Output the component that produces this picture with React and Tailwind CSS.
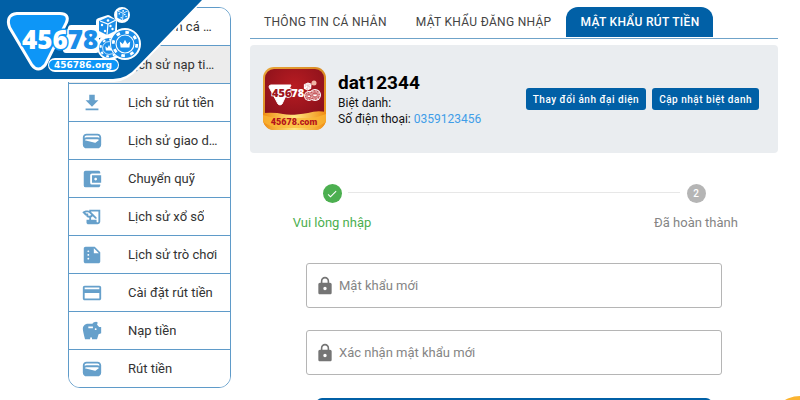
import {
    MdAccountBalanceWallet,
    MdCheck,
    MdCreditCard,
    MdDownload,
    MdHistoryEdu,
    MdLock,
    MdPerson,
    MdSavings,
    MdSummarize,
    MdUpload,
    MdWallet,
} from "react-icons/md";

const menu = [
    { label: "Thông tin cá nhân", icon: MdPerson },
    { label: "Lịch sử nạp tiền", icon: MdUpload, active: true },
    { label: "Lịch sử rút tiền", icon: MdDownload },
    { label: "Lịch sử giao dịch", icon: MdWallet },
    { label: "Chuyển quỹ", icon: MdAccountBalanceWallet },
    { label: "Lịch sử xổ số", icon: MdHistoryEdu },
    { label: "Lịch sử trò chơi", icon: MdSummarize },
    { label: "Cài đặt rút tiền", icon: MdCreditCard },
    { label: "Nạp tiền", icon: MdSavings },
    { label: "Rút tiền", icon: MdWallet },
];

const tabs = [
    { label: "THÔNG TIN CÁ NHÂN" },
    { label: "MẬT KHẨU ĐĂNG NHẬP" },
    { label: "MẬT KHẨU RÚT TIỀN", active: true },
];

function Chip({ cx, cy, r, fill, mark }) {
    return (
        <g>
            <circle cx={cx} cy={cy} r={r} fill={fill} />
            <circle
                cx={cx}
                cy={cy}
                r={r * 0.84}
                fill="none"
                stroke={mark}
                strokeWidth={r * 0.2}
                strokeDasharray={`${r * 0.26} ${r * 0.4}`}
            />
            <circle cx={cx} cy={cy} r={r * 0.64} fill={fill} stroke={mark} strokeWidth={r * 0.08} />
            <path
                d="M-5 4 -6 -3 -2.500 0 0 -5 2.500 0 6 -3 5 4Z"
                fill={mark}
                transform={`translate(${cx} ${cy}) scale(${r / 16})`}
            />
        </g>
    );
}

function Die({ x, y, size, fill, mark }) {
    return (
        <g transform={`translate(${x} ${y}) scale(${size / 20})`}>
            <path d="M2 5 11 1 19 4 18 15 10 19 2 15Z" fill={fill} strokeLinejoin="round" />
            <path d="M3 5 11 8 19 4M11 8 10 19" fill="none" stroke={mark} strokeWidth="1.200" />
            <g fill={mark}>
                <circle cx="11" cy="4.500" r="1.300" />
                <circle cx="5" cy="9" r="1.200" />
                <circle cx="8" cy="15" r="1.200" />
                <circle cx="13.500" cy="10" r="1.200" />
                <circle cx="15.500" cy="13" r="1.200" />
            </g>
        </g>
    );
}

function CornerLogo() {
    return (
        <svg
            className="pointer-events-none absolute top-0 left-0 z-10"
            width="216"
            height="83"
            viewBox="0 0 216 83"
            role="img"
            aria-label="45678"
        >
            <path d="M0 0H204L140 67Q127 82 114 82H0Z" fill="#fff" />
            <path d="M0 0H202L137 67Q127 79 113 79H0Z" fill="#0160a6" />
            <g fill="#fff" stroke="#fff" strokeWidth="6" strokeLinejoin="round">
                <path d="M17 15H60Q68 15 65 22L44 64Q38 71 33 64L11 27Q7 16 17 15Z" />
                <path d="M71 28H96V50H66Z" />
                <path d="M99 21 108 18 114 22V33L99 35Z" />
                <circle cx="110" cy="47" r="10" />
                <circle cx="125" cy="44" r="13" />
                <circle cx="122" cy="15" r="5" />
            </g>
            <rect x="48" y="58" width="71" height="14" rx="7" fill="#fff" />
            <path d="M17 15H60Q68 15 65 22L44 64Q38 71 33 64L11 27Q7 16 17 15Z" fill="#0d96f7" />
            <text
                x="22"
                y="49"
                fill="#fff"
                stroke="#0d96f7"
                strokeWidth="3"
                strokeLinejoin="round"
                paintOrder="stroke"
                fontFamily="'Open Sans', sans-serif"
                fontWeight="800"
                fontSize="26"
            >
                456
                <tspan fill="#1a8de8" stroke="#fff">78</tspan>
            </text>
            <Chip cx={109} cy={48} r={10} fill="#1a8de8" mark="#fff" />
            <Die x={97} y={16} size={20} fill="#1a8de8" mark="#fff" />
            <Die x={116} y={8} size={13} fill="#1a8de8" mark="#fff" />
            <circle cx="125" cy="44" r="15" fill="#fff" />
            <Chip cx={125} cy={44} r={14} fill="#1a8de8" mark="#fff" />
            <rect x="49" y="60" width="69" height="10" rx="5" fill="#0d96f7" />
            <text
                x="83"
                y="68"
                textAnchor="middle"
                fill="#fff"
                fontFamily="'DejaVu Sans', sans-serif"
                fontWeight="700"
                fontSize="9"
            >
                456786.org
            </text>
        </svg>
    );
}

function Avatar() {
    return (
        <svg className="size-16 shrink-0" viewBox="0 0 64 64" role="img" aria-label="45678.com">
            <defs>
                <linearGradient id="gold" x1="0" x2="1" y1="0" y2="1">
                    <stop offset="0" stopColor="#e9a63a" />
                    <stop offset=".5" stopColor="#d98a24" />
                    <stop offset="1" stopColor="#ef9a1c" />
                </linearGradient>
                <linearGradient id="ribbon" x1="0" x2="1" y1="0" y2="0">
                    <stop offset="0" stopColor="#f08c12" />
                    <stop offset=".5" stopColor="#ffe680" />
                    <stop offset="1" stopColor="#f08c12" />
                </linearGradient>
                <radialGradient id="red" cx=".5" cy=".3" r=".7">
                    <stop offset="0" stopColor="#b81c22" />
                    <stop offset="1" stopColor="#86101a" />
                </radialGradient>
                <clipPath id="badge">
                    <rect width="63" height="63" rx="11" />
                </clipPath>
            </defs>
            <g clipPath="url(#badge)">
                <rect width="63" height="63" fill="url(#gold)" />
                <rect x="2" y="2" width="59" height="58" rx="9" fill="url(#red)" />
                <path d="M0 46Q12 45 20 47T45 46Q54 43 63 45V63H0Z" fill="url(#ribbon)" />
                <path d="M0 48Q8 51 16 51H47Q56 50 63 47V55Q54 61 44 61H18Q7 60 0 55Z" fill="#fbb836" opacity=".7" />
            </g>
            <path d="M8 18H28L19 37Q17 39 15 37L6 20Q6 18 8 18Z" fill="#fff" stroke="#fff" strokeLinejoin="round" />
            <text
                x="9"
                y="30"
                fill="#a0151d"
                stroke="#fff"
                strokeWidth="1.500"
                paintOrder="stroke"
                fontFamily="'Open Sans', sans-serif"
                fontWeight="800"
                fontSize="11"
            >
                456<tspan fill="#fff" stroke="none">78</tspan>
            </text>
            <Die x={40} y={15} size={9} fill="#fff" mark="#dc9b9c" />
            <circle cx="51" cy="16" r="2.500" fill="#f0b6a5" />
            <g fill="#fff">
                <circle cx="46" cy="29" r="5" />
                <circle cx="52" cy="28" r="6" />
            </g>
            <Chip cx={46} cy={29} r={4} fill="#c7575b" mark="#fff" />
            <Chip cx={52} cy={28} r={5} fill="#c7575b" mark="#fff" />
            <text
                x="31"
                y="58"
                textAnchor="middle"
                fill="#b5121b"
                fontFamily="Roboto, sans-serif"
                fontWeight="900"
                fontSize="9"
            >
                45678.com
            </text>
        </svg>
    );
}

function Sidebar() {
    return (
        <nav className="w-[163px] shrink-0 self-start overflow-hidden rounded-xl border border-[#5f9bc9]">
            <ul>
                {menu.map(({ label, icon: Icon, active }) => (
                    <li key={label} className="border-b border-[#5f9bc9] last:border-b-0">
                        <a
                            href="#"
                            className={`flex h-[37px] items-center gap-[25px] px-3 text-[13px] text-[#333] ${active ? "bg-[#ececec]" : "bg-white"}`}
                        >
                            <Icon className="size-[22px] shrink-0 text-[#66a0cb]" />
                            <span className="truncate">{label}</span>
                        </a>
                    </li>
                ))}
            </ul>
        </nav>
    );
}

function ProfileCard() {
    return (
        <section className="mt-1.5 flex h-[108px] items-center rounded bg-[#eaedf0] pr-[19px] pl-[13px]">
            <Avatar />
            <div className="ml-[11px] flex-1 text-xs leading-4 text-[#111]">
                <h1 className="text-[19px] leading-6 font-bold text-black">dat12344</h1>
                <p>Biệt danh:</p>
                <p>
                    Số điện thoại: <span className="text-[#3f9de8]">0359123456</span>
                </p>
            </div>
            <div className="flex gap-1.5">
                <button className="h-[22px] rounded-[3px] bg-[#0160a6] px-[7px] text-[10px] font-medium tracking-wider text-white">
                    Thay đổi ảnh đại diện
                </button>
                <button className="h-[22px] rounded-[3px] bg-[#0160a6] px-[7px] text-[10px] font-medium tracking-wider text-white">
                    Cập nhật biệt danh
                </button>
            </div>
        </section>
    );
}

function Stepper() {
    return (
        <ol className="mt-[31px] flex px-9 text-[13px]">
            <li className="flex w-[92px] flex-col items-center gap-2.5 text-[#4caf50]">
                <span className="grid size-[19px] place-items-center rounded-full bg-[#4caf50] text-white">
                    <MdCheck className="size-3" />
                </span>
                <span className="leading-5 whitespace-nowrap">Vui lòng nhập</span>
            </li>
            <li className="-mx-[30px] mt-2 h-px flex-1 bg-[#e7e7e7]" aria-hidden="true" />
            <li className="flex w-[92px] flex-col items-center gap-2.5 text-[#858585]">
                <span className="grid size-[19px] place-items-center rounded-full bg-[#b5b5b5] text-[10px] font-medium text-white">
                    2
                </span>
                <span className="leading-5 whitespace-nowrap">Đã hoàn thành</span>
            </li>
        </ol>
    );
}

function PasswordField({ label }) {
    return (
        <label className="flex h-[45px] items-center gap-1 rounded-[3px] border border-[#b5b5b5] pl-2">
            <MdLock className="size-5 shrink-0 text-[#757575]" />
            <input
                type="password"
                aria-label={label}
                placeholder={label}
                className="h-full min-w-0 flex-1 text-[13px] outline-none placeholder:text-[#858585]"
            />
        </label>
    );
}

export default function App() {
    return (
        <div className="relative h-screen overflow-hidden bg-white font-['Roboto',sans-serif]">
            <CornerLogo />
            <div className="flex gap-[19px] pt-[7px] pr-[22px] pl-[68px]">
                <Sidebar />
                <main className="min-w-0 flex-1">
                    <div role="tablist" className="flex gap-px border-b border-[#6fa3c9] pb-px">
                        {tabs.map(({ label, active }) => (
                            <button
                                key={label}
                                role="tab"
                                aria-selected={!!active}
                                className={`h-[30px] rounded-t-xl px-3.5 text-xs tracking-wide whitespace-nowrap ${active ? "bg-[#0160a6] font-medium text-white" : "text-[#444]"}`}
                            >
                                {label}
                            </button>
                        ))}
                    </div>
                    <ProfileCard />
                    <Stepper />
                    <form className="mt-[30px] flex flex-col gap-[22px] px-14">
                        <PasswordField label="Mật khẩu mới" />
                        <PasswordField label="Xác nhận mật khẩu mới" />
                        <button className="mx-2.5 mt-px h-9 rounded-md bg-[#0160a6] text-[13px] font-medium text-white">
                            Gửi
                        </button>
                    </form>
                </main>
            </div>
            <div className="absolute -right-[30px] -bottom-14 size-[60px] rounded-full bg-[#fbb431]" />
        </div>
    );
}
